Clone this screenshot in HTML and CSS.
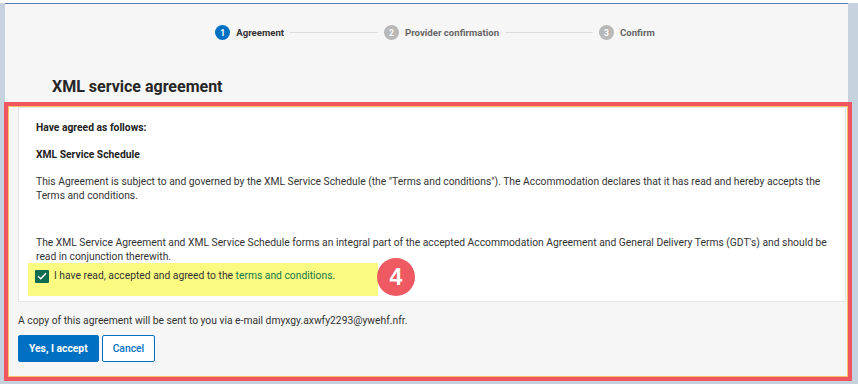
FILE: index.html
```html
<!DOCTYPE html>
<html lang="en">
<head>
    <meta charset="UTF-8">
    <meta name="viewport" content="width=device-width, initial-scale=1.0">
    <title>XML service agreement</title>
    <link rel="stylesheet" href="styles.css">
</head>
<body>
    <div class="top-gap"></div>
    <div class="panel">
        <div class="steps">
            <div class="step active"><span class="dot">1</span>Agreement</div>
            <div class="step-line"></div>
            <div class="step"><span class="dot">2</span>Provider confirmation</div>
            <div class="step-line"></div>
            <div class="step"><span class="dot">3</span>Confirm</div>
        </div>

        <h1>XML service agreement</h1>

        <div class="marked">
            <div class="card">
                <p class="strong">Have agreed as follows:</p>
                <p class="strong">XML Service Schedule</p>
                <p>This Agreement is subject to and governed by the XML Service Schedule (the "Terms and conditions"). The Accommodation declares that it has read and hereby accepts the Terms and conditions.</p>
                <p class="spaced">The XML Service Agreement and XML Service Schedule forms an integral part of the accepted Accommodation Agreement and General Delivery Terms (GDT's) and should be read in conjunction therewith.</p>
                <label class="agree">
                    <span class="check">
                        <svg width="10" height="8" viewBox="0 0 10 8"><path d="M1 4.2 L3.8 6.8 L9 1.2" fill="none" stroke="#fff" stroke-width="1.4"/></svg>
                    </span>
                    I have read, accepted and agreed to the&nbsp;<a href="#">terms and conditions</a>.
                </label>
            </div>
            <span class="badge">4</span>

            <p class="mail">A copy of this agreement will be sent to you via e-mail dmyxgy.axwfy2293@ywehf.nfr.</p>
            <div class="buttons">
                <button class="btn primary">Yes, I accept</button>
                <button class="btn">Cancel</button>
            </div>
        </div>
    </div>
</body>
</html>
```

FILE: styles.css
```css
body {
    margin: 0;
    font-family: Roboto, "Noto Sans", sans-serif;
    font-size: 10.3px;
    color: #333;
    background-color: #c7d2df;
    height: 384px;
    overflow: hidden;
}
.top-gap {
    height: 3px;
    background-color: #fff;
}
.panel {
    background-color: #f6f6f6;
    border-top: 1px solid #5a7cb8;
    margin: 0 10px 0 5px;
    height: 376px;
}
.steps {
    display: flex;
    align-items: center;
    justify-content: center;
    padding: 21px 0 0 17px;
    height: 15px;
}
.step {
    display: flex;
    align-items: center;
    font-size: 9.6px;
    font-weight: 700;
    color: #666;
}
.step.active {
    color: #333;
}
.dot {
    width: 15px;
    height: 15px;
    border-radius: 50%;
    background-color: #b8b8b8;
    color: #fff;
    font-size: 8.5px;
    display: flex;
    align-items: center;
    justify-content: center;
    margin-right: 6px;
}
.step.active .dot {
    background-color: #0071c2;
}
.step-line {
    width: 88px;
    height: 1px;
    background-color: #dcdcdc;
    margin: 0 6px;
}
h1 {
    font-size: 16px;
    font-weight: 700;
    color: #262626;
    margin: 36px 0 0 47px;
    line-height: 22px;
}
.marked {
    position: relative;
    margin: 4px -4px 0 -1px;
    border: 4px solid #f0565f;
    box-shadow: inset 0 0 0 1px #f7c06a;
    padding: 1px 2px 15px 10px;
}
.card {
    background-color: #fff;
    border: 1px solid #e6e6e6;
    padding: 13px 17px 5px;
}
.card p {
    margin: 0 0 13.5px;
    line-height: 13.5px;
}
.card p.strong {
    font-weight: 700;
    color: #222;
}
.card p.spaced {
    margin-top: 34px;
    margin-bottom: 0;
}
.agree {
    display: inline-flex;
    align-items: center;
    background-color: #fbfb82;
    margin-left: -8px;
    padding: 6px 43px 13px 7px;
    line-height: 14px;
}
.check {
    width: 14px;
    height: 13px;
    background-color: #0d6b4f;
    border-radius: 1px;
    display: flex;
    align-items: center;
    justify-content: center;
    margin-right: 5px;
}
.agree a {
    color: #13784b;
    text-decoration: none;
}
.badge {
    position: absolute;
    left: 369px;
    top: 152px;
    width: 38px;
    height: 38px;
    border-radius: 50%;
    background-color: #ef5962;
    color: #fff;
    font-family: "Liberation Sans", Arial, sans-serif;
    font-size: 23px;
    font-weight: 700;
    display: flex;
    align-items: center;
    justify-content: center;
}
.mail {
    margin: 12px 0 0;
    line-height: 14px;
}
.buttons {
    display: flex;
    gap: 3px;
    margin-top: 7px;
}
.btn {
    font-family: inherit;
    font-size: 10.3px;
    height: 27px;
    padding: 0 10px;
    border: 1px solid #0071c2;
    border-radius: 2px;
    background-color: #fff;
    color: #0071c2;
    font-weight: 500;
}
.btn.primary {
    background-color: #0071c2;
    color: #fff;
    font-weight: 700;
    padding: 0 10px;
}
```
